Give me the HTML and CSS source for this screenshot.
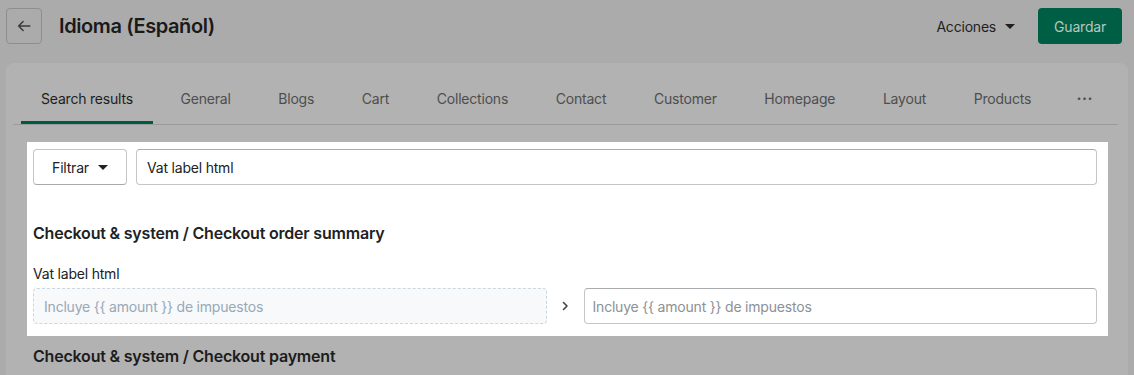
FILE: index.html
```html
<!DOCTYPE html>
<html lang="es">
<head>
  <meta charset="UTF-8">
  <meta name="viewport" content="width=device-width, initial-scale=1.0">
  <title>Idioma (Español)</title>
  <link rel="stylesheet" href="styles.css">
</head>
<body>
  <!-- Page header -->
  <header class="topbar">
    <button class="back" aria-label="Volver">
      <svg width="18" height="18" viewBox="0 0 20 20"><path d="M16.5 10H4M9 5l-5 5 5 5" fill="none" stroke="currentColor" stroke-width="1.7" stroke-linecap="round" stroke-linejoin="round"/></svg>
    </button>
    <h1>Idioma (Español)</h1>
    <div class="actions">
      <button class="menu">Acciones <span class="caret"></span></button>
      <button class="primary">Guardar</button>
    </div>
  </header>

  <main class="card">
    <ul class="tabs">
      <li class="tab active">Search results</li>
      <li class="tab">General</li>
      <li class="tab">Blogs</li>
      <li class="tab">Cart</li>
      <li class="tab">Collections</li>
      <li class="tab">Contact</li>
      <li class="tab">Customer</li>
      <li class="tab">Homepage</li>
      <li class="tab">Layout</li>
      <li class="tab">Products</li>
      <li class="tab more">•••</li>
    </ul>

    <!-- Highlighted search block -->
    <section class="spot">
      <div class="search">
        <button class="filter">Filtrar <span class="caret"></span></button>
        <input class="query" type="text" value="Vat label html">
      </div>

      <h2>Checkout &amp; system / Checkout order summary</h2>
      <label class="field-label" for="vat">Vat label html</label>
      <div class="pair">
        <div class="source">Incluye {{ amount }} de impuestos</div>
        <svg class="chev" width="12" height="12" viewBox="0 0 12 12"><path d="M4.5 2.5 8 6l-3.5 3.5" fill="none" stroke="currentColor" stroke-width="1.6" stroke-linecap="round" stroke-linejoin="round"/></svg>
        <input id="vat" class="target" type="text" placeholder="Incluye {{ amount }} de impuestos">
      </div>
    </section>

    <h2 class="next">Checkout &amp; system / Checkout payment</h2>
  </main>
</body>
</html>
```

FILE: styles.css
```css
/* --- Base --- */
* {box-sizing:border-box;margin:0;padding:0}
html,body{height:100%;overflow:hidden}
body{font-family:Inter, "Noto Sans", sans-serif;background:#ababab;color:#1c1c1c;font-size:14px;letter-spacing:-.2px}
button,input{font-family:inherit;font-size:14px;letter-spacing:inherit}

/* --- Header --- */
.topbar{display:flex;align-items:center;height:52px;padding:8px 12px 8px 6px}
.back{width:36px;height:36px;display:flex;align-items:center;justify-content:center;background:transparent;border:1px solid #8e8e8e;border-radius:4px;color:#3d3d3d}
h1{margin-left:17px;font-size:20px;font-weight:600;letter-spacing:-.4px;color:#1a1a1a}
.actions{margin-left:auto;display:flex;align-items:center;gap:23px}
.menu{display:flex;align-items:center;gap:9px;background:none;border:none;color:#1f1f1f}
.caret{width:0;height:0;border-left:5px solid transparent;border-right:5px solid transparent;border-top:5px solid currentColor}
.primary{height:36px;padding:0 16px;background:#005e45;color:#b3c8bf;border:none;border-radius:4px}

/* --- Card --- */
.card{margin:11px 6px 0;height:400px;background:#b2b2b2;border-radius:8px;padding-top:14px;box-shadow:0 0 0 1px #ababab}

/* --- Tabs --- */
.tabs{list-style:none;display:flex;gap:7.6px;margin:0 10px 0 7px;padding-left:8px;border-bottom:1px solid #9b9b9b}
.tab{height:47px;padding:0 20px 2px;display:flex;align-items:center;border-bottom:3px solid transparent;color:#4e4e4e;white-space:nowrap}
.tab.active{color:#1e1e1e;border-bottom-color:#005a43}
.tab.more{padding:0 18px 2px;font-size:8px;letter-spacing:1px}

/* --- Spotlight section --- */
.spot{margin:17px 20px 0 21px;background:#fff;padding:7px 11px 12px 6px}
.search{display:flex;gap:9px;height:36px}
.filter{width:94px;display:flex;align-items:center;justify-content:center;gap:9px;background:#fff;border:1px solid #c4c5c6;border-bottom-color:#a8a9aa;border-radius:4px;color:#202223}
.query{flex:1;padding:0 10px;border:1px solid #c4c5c6;border-top-color:#a9abad;border-radius:4px;color:#202223}
h2{margin-top:36px;font-size:16px;line-height:24px;font-weight:600;color:#202223}
.field-label{display:block;margin-top:19px;line-height:20px;color:#202223}
.pair{margin-top:4px;display:grid;grid-template-columns:1fr 37px 1fr;align-items:center}
.source{height:36px;padding:0 10px;display:flex;align-items:center;background:#f7f9fb;border:1px dashed #cdd6df;border-radius:4px;color:#98a8b8}
.chev{justify-self:center;color:#444}
.target{height:36px;padding:0 8px;border:1px solid #c4c5c6;border-top-color:#a9abad;border-radius:4px}
.target::placeholder{color:#8c9196}
.next{margin:8px 0 0 27px;color:#1c1c1c}
```
